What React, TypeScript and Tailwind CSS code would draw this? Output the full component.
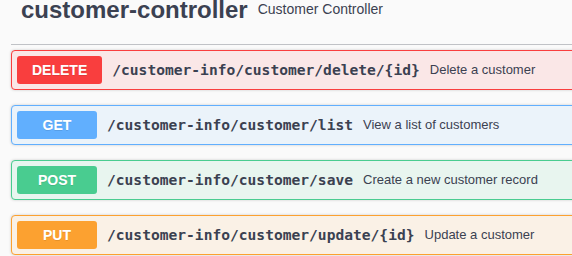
import React from "react";

type Op = {
  method: string;
  path: string;
  desc: string;
  badge: string;
  box: string;
};

const ops: Op[] = [
  {
    method: "DELETE",
    path: "/customer-info/customer/delete/{id}",
    desc: "Delete a customer",
    badge: "bg-[#f93e3e]",
    box: "border-[#f93e3e] bg-[#fae7e7]",
  },
  {
    method: "GET",
    path: "/customer-info/customer/list",
    desc: "View a list of customers",
    badge: "bg-[#61affe]",
    box: "border-[#61affe] bg-[#ebf3fa]",
  },
  {
    method: "POST",
    path: "/customer-info/customer/save",
    desc: "Create a new customer record",
    badge: "bg-[#49cc90]",
    box: "border-[#49cc90] bg-[#e8f5ef]",
  },
  {
    method: "PUT",
    path: "/customer-info/customer/update/{id}",
    desc: "Update a customer",
    badge: "bg-[#fca130]",
    box: "border-[#fca130] bg-[#faf1e6]",
  },
];

export default function App() {
  return (
    <div className="w-[572px] h-[256px] overflow-hidden bg-[#fafafa] font-['Liberation_Sans',Arial,sans-serif] text-[#3b4151]">
      <div className="-mt-[25px] pl-[11px] w-[640px]">
        <div className="flex items-center py-[10px] pl-[10px] pr-[20px] border-b border-[rgba(59,65,81,0.3)] mb-[5px]">
          <span className="text-[24px] font-bold leading-normal text-[#3b4151]">customer-controller</span>
          <small className="flex-1 px-[10px] text-[14px] leading-normal font-normal text-[#3b4151]">
            <p className="my-[14px]">Customer Controller</p>
          </small>
        </div>
        {ops.map((op) => (
          <div
            key={op.method}
            className={`mb-[15px] border rounded-[4px] shadow-[0_0_3px_rgba(0,0,0,0.19)] ${op.box}`}
          >
            <div className="flex items-center p-[5px]">
              <span
                className={`min-w-[80px] px-[15px] py-[6px] rounded-[3px] text-center text-white text-[14px] font-bold leading-[16px] [text-shadow:0_1px_0_rgba(0,0,0,0.1)] ${op.badge}`}
              >
                {op.method}
              </span>
              <span className="px-[10px] font-['DejaVu_Sans_Mono',monospace] font-bold text-[14.6px] text-[#3b4151] whitespace-nowrap">
                {op.path}
              </span>
              <span className="text-[13px] text-[#3b4151] whitespace-nowrap">{op.desc}</span>
            </div>
          </div>
        ))}
      </div>
    </div>
  );
}
